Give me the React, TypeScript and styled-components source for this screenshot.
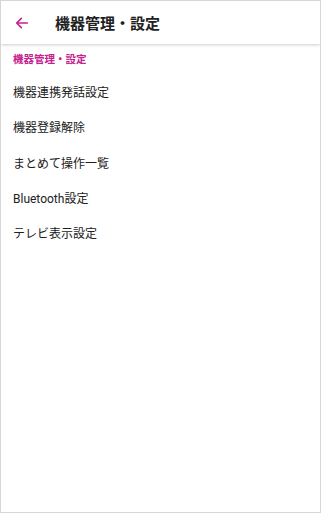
import styled, { createGlobalStyle } from 'styled-components';

const GlobalStyle = createGlobalStyle`
  html, body {
    margin: 0;
    padding: 0;
    background: #fff;
  }
  body {
    font-family: Roboto, "Noto Sans CJK JP", sans-serif;
  }
`;

const Frame = styled.div`
  box-sizing: border-box;
  width: 321px;
  height: 513px;
  border: 1px solid #d6d6d6;
  background: #fff;
  display: flex;
  flex-direction: column;
  overflow: hidden;
`;

const Header = styled.header`
  height: 43px;
  flex-shrink: 0;
  display: flex;
  align-items: center;
  background: #fff;
  box-shadow: 0 1px 3px rgba(0, 0, 0, 0.2);
  position: relative;
  z-index: 1;
`;

const BackButton = styled.button`
  width: 54px;
  height: 43px;
  padding: 0 0 0 13px;
  border: none;
  background: none;
  display: flex;
  align-items: center;
  cursor: pointer;
`;

const Title = styled.h1`
  margin: 0;
  font-size: 15px;
  font-weight: 700;
  color: #212121;
`;

const SectionLabel = styled.div`
  padding: 7px 12px 0;
  height: 18px;
  font-size: 10.5px;
  font-weight: 700;
  color: #c4238f;
  line-height: 18px;
`;

const List = styled.ul`
  list-style: none;
  margin: 0;
  padding: 5px 0 0;
`;

const Item = styled.li`
  height: 35.3px;
  display: flex;
  align-items: center;
  padding-left: 12px;
  font-size: 12px;
  color: #212121;
`;

const items = [
  '機器連携発話設定',
  '機器登録解除',
  'まとめて操作一覧',
  'Bluetooth設定',
  'テレビ表示設定',
];

export default function App() {
  return (
    <>
      <GlobalStyle />
      <Frame>
        <Header>
          <BackButton aria-label="戻る">
            <svg width="16" height="16" viewBox="0 0 24 24">
              <path
                d="M20 12H5M11 5l-7 7 7 7"
                fill="none"
                stroke="#c4238f"
                strokeWidth="2.4"
                strokeLinecap="round"
                strokeLinejoin="round"
              />
            </svg>
          </BackButton>
          <Title>機器管理・設定</Title>
        </Header>
        <SectionLabel>機器管理・設定</SectionLabel>
        <List>
          {items.map((t) => (
            <Item key={t}>{t}</Item>
          ))}
        </List>
      </Frame>
    </>
  );
}
